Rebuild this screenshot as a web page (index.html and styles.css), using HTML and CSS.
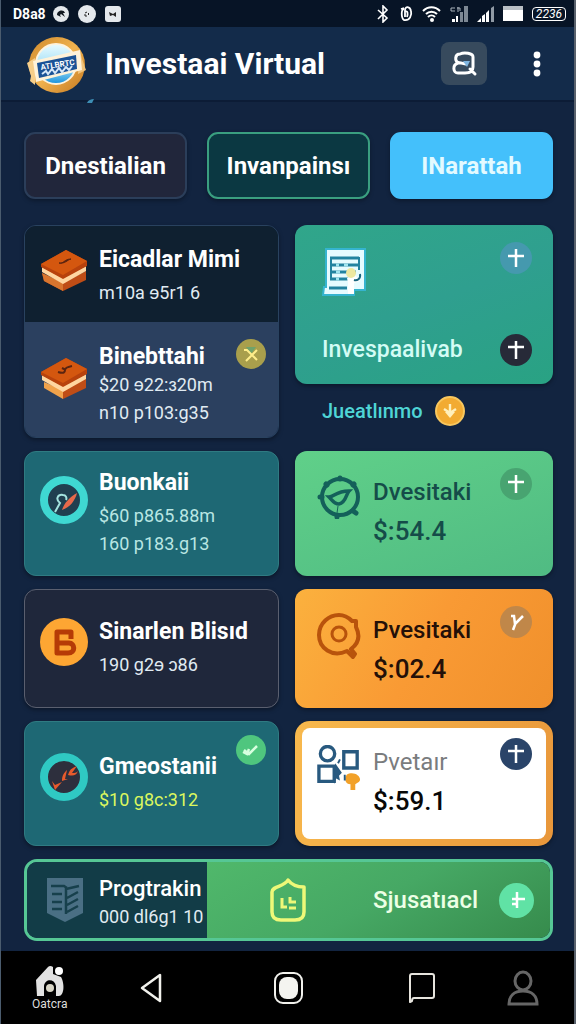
FILE: index.html
```html
<!DOCTYPE html>
<html lang="en">
<head>
  <meta charset="UTF-8" />
  <meta name="viewport" content="width=device-width, initial-scale=1" />
  <title>Investaai Virtual</title>
  <link rel="stylesheet" href="styles.css">
</head>
<body>

  <div class="app">
    <div class="status">
      <span class="status-time">D8a8</span>
      <svg width="16" height="16" viewBox="0 0 16 16"><circle cx="8" cy="8" r="8" fill="#e4e8ec"/><path d="M4 9c0-5 7-6 8-2l-2 0 2 4-4-3-1 1 1 2z" fill="#111820"/></svg>
      <svg width="18" height="18" viewBox="0 0 18 18"><circle cx="9" cy="9" r="9" fill="#e4e8ec"/><path d="M7 8l2-1M7 9v2l2 0M10 8l1 1-1 1" stroke="#222" stroke-width="1" fill="none"/></svg>
      <svg width="16" height="16" viewBox="0 0 16 16"><rect width="16" height="16" rx="3" fill="#e4e8ec"/><path d="M4 6l4 2 3-2v5l-3-2-3 1z" fill="#222"/></svg>
      <span class="spacer"></span>
      <svg width="14" height="18" viewBox="0 0 14 18"><path d="M2 5l9 8-4 4V1l4 4-9 9" stroke="#fff" stroke-width="1.6" fill="none"/></svg>
      <svg width="14" height="16" viewBox="0 0 14 16"><path d="M5 3C2 3 2 12 5 14c6 1 8-5 7-9C11 0 6 0 6 4v7M6 6c3-2 3 2 2 5M2 3l3-1" stroke="#fff" stroke-width="1.8" fill="none"/></svg>
      <svg width="19" height="16" viewBox="0 0 19 16"><path d="M1 5c5-5 12-5 17 0M4 8c3-3 8-3 11 0M6 11c2-2 5-2 7 0" stroke="#fff" stroke-width="2" fill="none"/><circle cx="10" cy="14" r="2" fill="#fff"/></svg>
      <svg width="18" height="16" viewBox="0 0 18 16"><path d="M2 16v-3h3v3zM6 16v-6h2v6z" fill="#fff"/><path d="M10 16V6h3v10zM14 16V0h4v16z" fill="#7d8894"/><path d="M5 2H1v3h4M7 2h3v3M8 1v5" stroke="#aab3bc" fill="none"/></svg>
      <svg width="17" height="16" viewBox="0 0 17 16"><path d="M0 16l4-4v4zM5 16v-6l3-2v8zM9 16V7l3-3v12z" fill="#fff"/><path d="M14 16V2l3-2v16z" fill="#909aa5"/></svg>
      <svg width="20" height="15" viewBox="0 0 20 15"><path d="M0 0h20v15H0z" fill="#fff"/><path d="M0 0h20v4H0z" fill="#b9bfc5"/></svg>
      <span class="battery">2236</span>
    </div>

    <header class="topbar">
      <svg class="logo" width="60" height="60" viewBox="0 0 60 60">
        <defs>
          <linearGradient id="gold" x2="1" y2="1"><stop offset="0" stop-color="#cf8a2c"/><stop offset=".5" stop-color="#f0b24f"/><stop offset="1" stop-color="#c57920"/></linearGradient>
          <linearGradient id="sky" x2="0" y2="1"><stop offset="0" stop-color="#e9fbff"/><stop offset=".6" stop-color="#9ddcf5"/><stop offset="1" stop-color="#1690dc"/></linearGradient>
        </defs>
        <circle cx="31" cy="31" r="28" fill="url(#gold)"/>
        <path d="M1 29l8-5v27l-5-4 1-5z" fill="#f6ce8a"/>
        <path d="M53 14l3 11 4 11-8 4z" fill="#f0c27a"/>
        <circle cx="30" cy="30" r="20" fill="url(#sky)" stroke="#fff3dd" stroke-width="2"/>
        <path d="M7 27l47-11 2 20L10 48z" fill="#fff2d9"/>
        <path d="M11 29l39-8 1 14-38 9z" fill="#1b5296"/>
        <text class="logo-text" x="15" y="36" transform="rotate(-9 15 36)">ATLBRTC</text>
        <path d="M16 40l4-3 2 3 4-5 3 4 4-5 3 4 4-5 3 3 3-4" stroke="#d5e6f8" stroke-width="2" fill="none"/>
        <path d="M61 69c1-3 4-4 7-4l-2 4z" fill="#3d8db4"/>
      </svg>
      <h1 class="title">Investaai Virtual</h1>
      <button class="search" aria-label="Search">
        <svg width="28" height="28" viewBox="0 0 28 28" fill="none" stroke="#fff" stroke-width="3" stroke-linecap="round"><path d="M9 13C4 11 5 4 10 4c4-2 13-1 13 3v10c0 5-4 6-8 6H8c-5 0-6-8 0-10 3-1 5 1 8 1M20 19l5 5"/><path d="M13 11h7l-3 6z" fill="#7fb5e0" stroke="none"/></svg>
      </button>
      <button class="more" aria-label="More">
        <svg width="8" height="26" viewBox="0 0 8 26" fill="#fff"><circle cx="4" cy="4" r="3.4"/><circle cx="4" cy="13" r="3.4"/><circle cx="4" cy="22" r="3.4"/></svg>
      </button>
    </header>

    <main class="content">
      <div class="tabs">
        <button class="tab">Dnestialian</button>
        <button class="tab tab-green">Invanpainsı</button>
        <button class="tab tab-blue">INarattah</button>
      </div>

      <div class="columns">
        <div class="column">
          <section class="group">
            <div class="item item-dark">
              <svg class="icon" width="48" height="44" viewBox="0 0 48 44"><path d="M2 25l21 10 23-12v9L23 43 4 33z" fill="#bf4d16"/><path d="M2 25l21 10v8L4 33z" fill="#d8752e"/><path d="M2 19l21 11 23-12v5L23 36 2 24z" fill="#ffd6a0"/><path d="M1 16L26 2l21 11v5L23 31 1 19z" fill="#b8420c"/><path d="M1 16L26 2l21 11-24 14z" fill="#d4570f"/><path d="M19 15c5 1 5-4 12-4-4 1-6 5-12 4z" fill="#5a2410" stroke="#5a2410"/></svg>
              <div class="text">
                <h2 class="name">Eicadlar Mimi</h2>
                <p class="line">m10a ɘ5r1 6</p>
              </div>
            </div>
            <div class="item item-slate">
              <svg class="icon" width="48" height="44" viewBox="0 0 48 44"><path d="M4 26l19 8v9L4 32z" fill="#f0a24b"/><path d="M23 33l23-11v10L23 43z" fill="#bf4d16"/><path d="M2 19l21 11 23-12v5L23 36 2 24z" fill="#ffd6a0"/><path d="M1 16L26 2l21 11v5L23 31 1 19z" fill="#b8420c"/><path d="M1 16L26 2l21 11-24 14z" fill="#d4570f"/><path d="M18 16c6 2 7 0 7-2s2-3 7-4M22 12l4 2" fill="none" stroke="#5a2410" stroke-width="2"/></svg>
              <div class="text text-tight">
                <h2 class="name">Binebttahi</h2>
                <p class="line">$20 ɘ22:ɜ20m</p>
                <p class="line">n10 p103:g35</p>
              </div>
              <svg class="mark" width="30" height="30" viewBox="0 0 30 30"><circle cx="15" cy="15" r="15" fill="#a99f4c"/><path d="M10 8h10l-5 7z" fill="#6fa36a"/><path d="M8 11l3 0 10 10M21 11L10 22" stroke="#ffee8b" stroke-width="2" fill="none"/></svg>
            </div>
          </section>

          <section class="card card-teal card-tall">
            <svg class="icon" width="48" height="48" viewBox="0 0 48 48"><circle cx="24" cy="24" r="20" fill="#203f50" stroke="#3fd8d2" stroke-width="8"/><path d="M15 36l5-9c-5-4-2-9 3-8 3 0 4 3 3 5" stroke="#a4e3df" stroke-width="2" fill="none"/><path d="M22 34c2-7 8-13 15-17-2 8-7 14-15 17z" fill="#e8694a"/></svg>
            <div class="text">
              <h2 class="name">Buonkaii</h2>
              <p class="line">$60 p865.88m</p>
              <p class="line">160 p183.g13</p>
            </div>
          </section>

          <section class="card card-navy">
            <svg class="icon" width="48" height="48" viewBox="0 0 48 48"><circle cx="24" cy="24" r="24" fill="#fda633"/><path d="M31 21v-7H17v21h11c8 0 7-10 1-10H18" stroke="#b63b06" stroke-width="5" stroke-linejoin="round" fill="none"/></svg>
            <div class="text">
              <h2 class="name">Sinarlen Blisıd</h2>
              <p class="line">190 g2ɘ ɔ86</p>
            </div>
          </section>

          <section class="card card-teal">
            <svg class="icon" width="48" height="48" viewBox="0 0 48 48"><circle cx="24" cy="24" r="20" fill="#2d2f3d" stroke="#2fc9c3" stroke-width="8"/><path d="M12 28l3 4 7-3-7 8zM22 28c0-6 2-8 5-11l-2 9 3 0zM28 22c2-7 5-7 9-9l-5 7c3 0 4 0 6-2-2 5-5 5-10 4z" fill="#e85a2c"/></svg>
            <div class="text">
              <h2 class="name">Gmeostanii</h2>
              <p class="line line-lime">$10 g8c:312</p>
            </div>
            <svg class="mark" width="30" height="30" viewBox="0 0 30 30"><circle cx="15" cy="15" r="15" fill="#4fc67e"/><path d="M8 15l5 4 8-8M7 17l4 2 2-5" stroke="#d8ffdf" stroke-width="2.5" fill="none"/></svg>
          </section>
        </div>

        <div class="column">
          <div class="feature">
            <section class="promo">
              <div class="promo-row">
                <svg class="promo-icon" width="46" height="48" viewBox="0 0 46 48"><path d="M4 1h39v41H32v5H1l1-8h2z" fill="#e6fbff" stroke="#35b4cf" stroke-width="2"/><path d="M8 10h29M8 17h29M8 24h26M8 31h20M7 40h18" stroke="#2383a0" stroke-width="3"/><path d="M9 9v23M37 9v13" stroke="#2383a0" stroke-width="2"/><path d="M14 17h3M22 17h4M14 24h4M14 31h3" stroke="#9fe4ef" stroke-width="3"/><path d="M25 30l7-4 6 7-6 2v11h-6V35z" fill="#fff"/><circle cx="29" cy="25" r="5" fill="#eee8a0"/><path d="M38 26c1 5-3 7-6 6" stroke="#18647e" stroke-width="2" fill="none"/></svg>
                <button class="plus plus-blue" aria-label="Add"><svg width="18" height="20" viewBox="0 0 18 20"><path d="M9 1v18M1 8h16"/></svg></button>
              </div>
              <div class="promo-row">
                <h2 class="promo-name">Invespaalivab</h2>
                <button class="plus plus-dark" aria-label="Add"><svg width="18" height="20" viewBox="0 0 18 20"><path d="M9 1v18M1 7h16"/></svg></button>
              </div>
            </section>
            <div class="link-row">
              <a class="link" href="#">Jueatlınmo</a>
              <svg width="30" height="30" viewBox="0 0 30 30"><circle cx="15" cy="15" r="14" fill="#f2ab32" stroke="#f8c75e" stroke-width="2"/><path d="M15 8v10M9 13l6 4 6-4" stroke="#fff0bd" stroke-width="2.4" fill="none"/><path d="M10 16h10l-5 6z" fill="#fff0bd"/></svg>
            </div>
          </div>

          <section class="card price-card card-green">
            <svg width="44" height="44" viewBox="0 0 44 44" fill="none" stroke="#14605a" stroke-width="4"><circle cx="23" cy="22" r="18"/><path d="M12 22c5 0 7-6 20-6-3 3-3 12-10 13-5 0-7-4-10-7z" stroke-width="3.5"/><path d="M21 31l-1 7" stroke-width="1"/><path d="M23 3v1M3 22h2M36 36l3 2M9 9l1 1M37 9l-1 1M20 41v1" stroke-width="5" stroke-linecap="round"/></svg>
            <div class="text price-text">
              <h2 class="price-name">Dvesitaki</h2>
              <p class="price">$:54.4</p>
            </div>
            <button class="plus plus-green" aria-label="Add"><svg width="18" height="20" viewBox="0 0 18 20"><path d="M9 1v18M1 8h16"/></svg></button>
          </section>

          <section class="card price-card card-orange">
            <svg width="44" height="46" viewBox="0 0 44 46" fill="none" stroke="#b8530c" stroke-width="4"><path d="M30 38c-15 7-28-3-28-16C2 10 12 2 22 2c6 0 10 3 13 6l4 0 0 6c4 8 3 16-5 22l4 5-2 3z" stroke-linejoin="round"/><circle cx="22" cy="21" r="7" stroke-width="3"/></svg>
            <div class="text price-text">
              <h2 class="price-name">Pvesitaki</h2>
              <p class="price">$:02.4</p>
            </div>
            <button class="plus plus-tan" aria-label="Check"><svg width="18" height="20" viewBox="0 0 18 20"><path d="M4 4h3l1 8 8-8M9 10l-3 8"/></svg></button>
          </section>

          <section class="card price-card card-white">
            <svg width="44" height="46" viewBox="0 0 46 48" fill="none" stroke="#28597f" stroke-width="3.5"><circle cx="11" cy="9" r="7.5"/><path d="M28 7h14v17H28zM20 22H2v16h16V22"/><path d="M19 19l7 10-3 3 1 5-4-2-2 6z" fill="#28597f" stroke="none"/><path d="M31 31c6-4 14 0 14 5 0 3-4 4-5 5v6h-5v-6c-5 0-7-5-4-10z" fill="#f2a129" stroke="none"/><path d="M29 31v6M22 19l2-4" stroke-width="2"/></svg>
            <div class="text price-text">
              <h2 class="price-name">Pvetaır</h2>
              <p class="price">$:59.1</p>
            </div>
            <button class="plus plus-navy" aria-label="Add"><svg width="18" height="20" viewBox="0 0 18 20"><path d="M9 1v18M1 7h16"/></svg></button>
          </section>
        </div>
      </div>

      <section class="banner">
        <div class="banner-left">
          <svg width="36" height="44" viewBox="0 0 36 44"><path d="M0 0h36v35L18 44 0 35z" fill="#4a6f84"/><path d="M4 8h13l3 2M5 16h10M5 24h10M5 31h10" stroke="#17404c" stroke-width="2.5" fill="none"/><path d="M19 11l13-3M20 20l11-6M20 27l11-6M20 34l11-6M19 10v26" stroke="#17404c" stroke-width="2.5"/></svg>
          <div class="text text-tight">
            <h2 class="banner-name">Progtrakin</h2>
            <p class="line">000 dl6g1 10</p>
          </div>
        </div>
        <div class="banner-right">
          <svg width="38" height="46" viewBox="0 0 38 46" fill="none" stroke="#eef878" stroke-width="3.5"><path d="M19 3c3 4 8 7 16 7v25c0 6-4 8-9 8H12c-5 0-9-2-9-8V15c0-6 12-5 16-12z" stroke-linejoin="round"/><path d="M13 21v9h5M21 20v5h6M20 31h7" stroke-width="3"/></svg>
          <span class="banner-title">Sjusatıacl</span>
          <button class="plus plus-mint" aria-label="Add"><svg width="18" height="20" viewBox="0 0 18 20"><path d="M9 2v16M4 14h5M4 9h13" stroke-width="4"/></svg></button>
        </div>
      </section>
    </main>

    <nav class="bottom">
      <button class="nav-button" aria-label="Home">
        <svg width="32" height="32" viewBox="0 0 32 32"><path d="M2 15L14 2q2-2 5 0v7l8 3c4 7 3 19-2 19h-3V21c-2-8-11-7-12 0v10H3z" fill="#e2e2e2"/><circle cx="25" cy="6" r="4" fill="#fff"/><circle cx="16" cy="23" r="4" fill="#d8d5c6"/></svg>
        <span class="nav-label">Oatcra</span>
      </button>
      <button class="nav-button" aria-label="Back">
        <svg width="24" height="32" viewBox="0 0 24 32"><path d="M21 3v26L3 16z" fill="none" stroke="#f1f1ec" stroke-width="2.5" stroke-linejoin="round"/></svg>
      </button>
      <button class="nav-button" aria-label="Overview">
        <svg width="32" height="32" viewBox="0 0 32 32"><rect x="3" y="1" width="27" height="30" rx="8" fill="none" stroke="#f1f1ec" stroke-width="2"/><rect x="7" y="5" width="19" height="22" rx="8" fill="#f4f4f0"/></svg>
      </button>
      <button class="nav-button" aria-label="Messages">
        <svg width="28" height="32" viewBox="0 0 28 32"><path d="M2 30V4q0-2 2-2h20q2 0 2 2v20q0 2-2 2H6q-2 0-2 3z" fill="none" stroke="#e6e4dd" stroke-width="2" stroke-linejoin="round"/></svg>
      </button>
      <button class="nav-button" aria-label="Profile">
        <svg width="32" height="36" viewBox="0 0 32 36" fill="none" stroke="#666" stroke-width="3"><ellipse cx="16" cy="11" rx="8" ry="9"/><path d="M2 34c0-8 5-13 14-13s14 5 14 13z"/></svg>
      </button>
    </nav>
  </div>

</body>
</html>
```

FILE: styles.css
```css
body {
  margin: 0;
  background-color: #122440;
  font-family: Roboto, "Liberation Sans", sans-serif;
  color: #fff;
}
h1,
h2,
p {
  margin: 0;
}
button {
  margin: 0;
  padding: 0;
  border: none;
  background: none;
  color: inherit;
  font-family: inherit;
  cursor: pointer;
}
svg {
  display: block;
  flex: none;
}
.app {
  box-sizing: border-box;
  min-height: 100vh;
  display: flex;
  flex-direction: column;
  border-left: 1px solid #4b5c6e;
  border-right: 2px solid #59616c;
}

/* Status bar */
.status {
  display: flex;
  align-items: center;
  gap: 9px;
  height: 27px;
  padding: 0 8px 0 12px;
  background-color: #071426;
}
.status-time {
  width: 31px;
  font-size: 14px;
  font-weight: 700;
}
.spacer {
  flex: 1;
}
.battery {
  padding: 0 3px;
  border: 1px solid #fff;
  border-radius: 4px;
  font-size: 12px;
  line-height: 12px;
  font-style: italic;
}

/* Header */
.topbar {
  display: flex;
  align-items: center;
  height: 73px;
  padding: 0 33px 0 25px;
  background-color: #132b4a;
  border-bottom: 2px solid #0c1c36;
}
.logo {
  overflow: visible;
}
.logo-text {
  fill: #fff;
  font-size: 8px;
  font-weight: 700;
}
.title {
  flex: 1;
  margin-left: 19px;
  font-size: 30px;
  font-weight: 700;
}
.search {
  display: flex;
  align-items: center;
  justify-content: center;
  width: 46px;
  height: 43px;
  margin-right: 46px;
  border-radius: 8px;
  background-color: #374a5d;
}

/* Content */
.content {
  flex: 1;
  padding: 30px 21px 10px 23px;
}
.tabs {
  display: grid;
  grid-template-columns: repeat(3, 1fr);
  gap: 20px;
  margin-bottom: 26px;
}
.tab {
  height: 67px;
  border: 2px solid #2b3e5a;
  border-radius: 11px;
  background-color: #21263b;
  box-shadow: 0 2px 4px rgba(0, 0, 0, 0.3);
  font-size: 24px;
  font-weight: 700;
}
.tab-green {
  border-color: #3a9f80;
  background-color: #0b3842;
}
.tab-blue {
  border-color: #44c0fb;
  background-color: #44c0fb;
  color: #e3faff;
}
.columns {
  display: grid;
  grid-template-columns: 255fr 258fr;
  gap: 16px;
}
.column {
  display: flex;
  flex-direction: column;
  gap: 13px;
}
.group,
.card,
.promo {
  border-radius: 12px;
  box-shadow: 0 2px 4px rgba(0, 0, 0, 0.35);
}
.group {
  overflow: hidden;
  border: 1px solid #29425f;
}
.item,
.card {
  box-sizing: border-box;
  display: flex;
  align-items: center;
  gap: 11px;
  padding: 0 12px 0 15px;
}
.item-dark {
  height: 96px;
  background-color: #0f2030;
}
.item-slate {
  height: 115px;
  padding-top: 4px;
  background-color: #2b405f;
}
.icon {
  margin-bottom: 8px;
}
.text {
  flex: 1;
  white-space: nowrap;
}
.name {
  font-size: 23px;
  line-height: 38px;
  font-weight: 700;
}
.line {
  color: #e0ebf2;
  font-size: 18px;
  line-height: 28px;
}
.text-tight {
  padding-top: 6px;
}
.text-tight .name {
  line-height: 28px;
}
.line-lime {
  color: #dcf75e;
}
.mark {
  align-self: flex-start;
  margin-top: 13px;
}
.card {
  height: 125px;
  padding-bottom: 6px;
  border: 1px solid transparent;
}
.card-teal {
  border-color: #2f7b82;
  background-color: #1e6874;
}
.card-tall .icon {
  align-self: flex-start;
  margin-top: 24px;
}
.card-tall .line {
  color: #b9e6e3;
}
.card-navy {
  height: 119px;
  border-color: #5a5f6f;
  background-color: #1f273b;
}

/* Right column */
.feature {
  height: 213px;
}
.promo {
  box-sizing: border-box;
  height: 159px;
  display: flex;
  flex-direction: column;
  justify-content: space-between;
  padding: 17px 21px 18px 27px;
  background: linear-gradient(160deg, #30a68a, #2f9f8f 50%, #29a283);
}
.promo-row {
  display: flex;
  align-items: center;
  justify-content: space-between;
}
.promo-row:first-child {
  align-items: flex-start;
}
.promo-icon {
  margin-top: 6px;
}
.promo-name {
  color: #d3fcf5;
  font-size: 23px;
  line-height: 28px;
  font-weight: 500;
}
.plus {
  display: flex;
  align-items: center;
  justify-content: center;
  flex: none;
  width: 32px;
  height: 32px;
  border-radius: 50%;
}
.plus path {
  fill: none;
  stroke: #fff;
  stroke-width: 2.5;
}
.plus-blue { background-color: #4599ae; }
.plus-dark { background-color: #272a38; }
.plus-green { background-color: #48a471; }
.plus-tan { background-color: #c08749; }
.plus-navy { background-color: #2a4469; }
.plus-mint {
  width: 35px;
  height: 35px;
  background-color: #60e2a5;
}
.link-row {
  display: flex;
  align-items: center;
  gap: 12px;
  height: 53px;
  padding-left: 27px;
}
.link {
  color: #4fd5d6;
  font-size: 20px;
  font-weight: 500;
  text-decoration: none;
}
.price-card {
  align-items: flex-start;
  gap: 12px;
  padding: 16px 20px 0 21px;
}
.price-card > svg {
  margin-top: 7px;
}
.price-text {
  padding-top: 5px;
}
.price-name {
  font-size: 24px;
  line-height: 38px;
  font-weight: 500;
}
.price {
  font-size: 26px;
  line-height: 40px;
  font-weight: 500;
}
.card-green {
  background: linear-gradient(160deg, #60d089, #50bb83) border-box;
  color: #154c49;
}
.card-orange {
  height: 119px;
  background: linear-gradient(120deg, #fbb13e, #f99a34 50%, #f0902c) border-box;
  color: #241008;
}
.card-white {
  padding: 10px 14px 0 15px;
  border: 7px solid transparent;
  border-radius: 15px;
  background: linear-gradient(#fff, #fff) padding-box, linear-gradient(110deg, #f8b94d, #e8963a) border-box;
  color: #080808;
}
.card-white .price-name {
  color: #7a7c7e;
  font-weight: 400;
}

/* Banner */
.banner {
  display: flex;
  height: 76px;
  margin-top: 13px;
  overflow: hidden;
  border: 3px solid #56c795;
  border-radius: 13px;
}
.banner-left {
  box-sizing: border-box;
  display: flex;
  align-items: center;
  gap: 16px;
  width: 180px;
  padding-left: 20px;
  background-color: #123c47;
}
.banner-right {
  flex: 1;
  display: flex;
  align-items: center;
  padding: 0 16px 0 62px;
  background: linear-gradient(150deg, #50b86b, #46a864 50%, #368b4c);
}
.banner-name {
  font-size: 22px;
  line-height: 28px;
  font-weight: 500;
}
.banner-title {
  flex: 1;
  margin-left: 66px;
  color: #ecffe5;
  font-size: 24px;
  font-weight: 500;
}

/* Bottom navigation */
.bottom {
  display: grid;
  grid-template-columns: 98fr 106fr 168fr 102fr 102fr;
  align-items: center;
  height: 73px;
  background-color: #000;
}
.nav-button {
  display: flex;
  flex-direction: column;
  align-items: center;
}
.nav-label {
  color: #ddd;
  font-size: 12px;
  line-height: 14px;
}
```
